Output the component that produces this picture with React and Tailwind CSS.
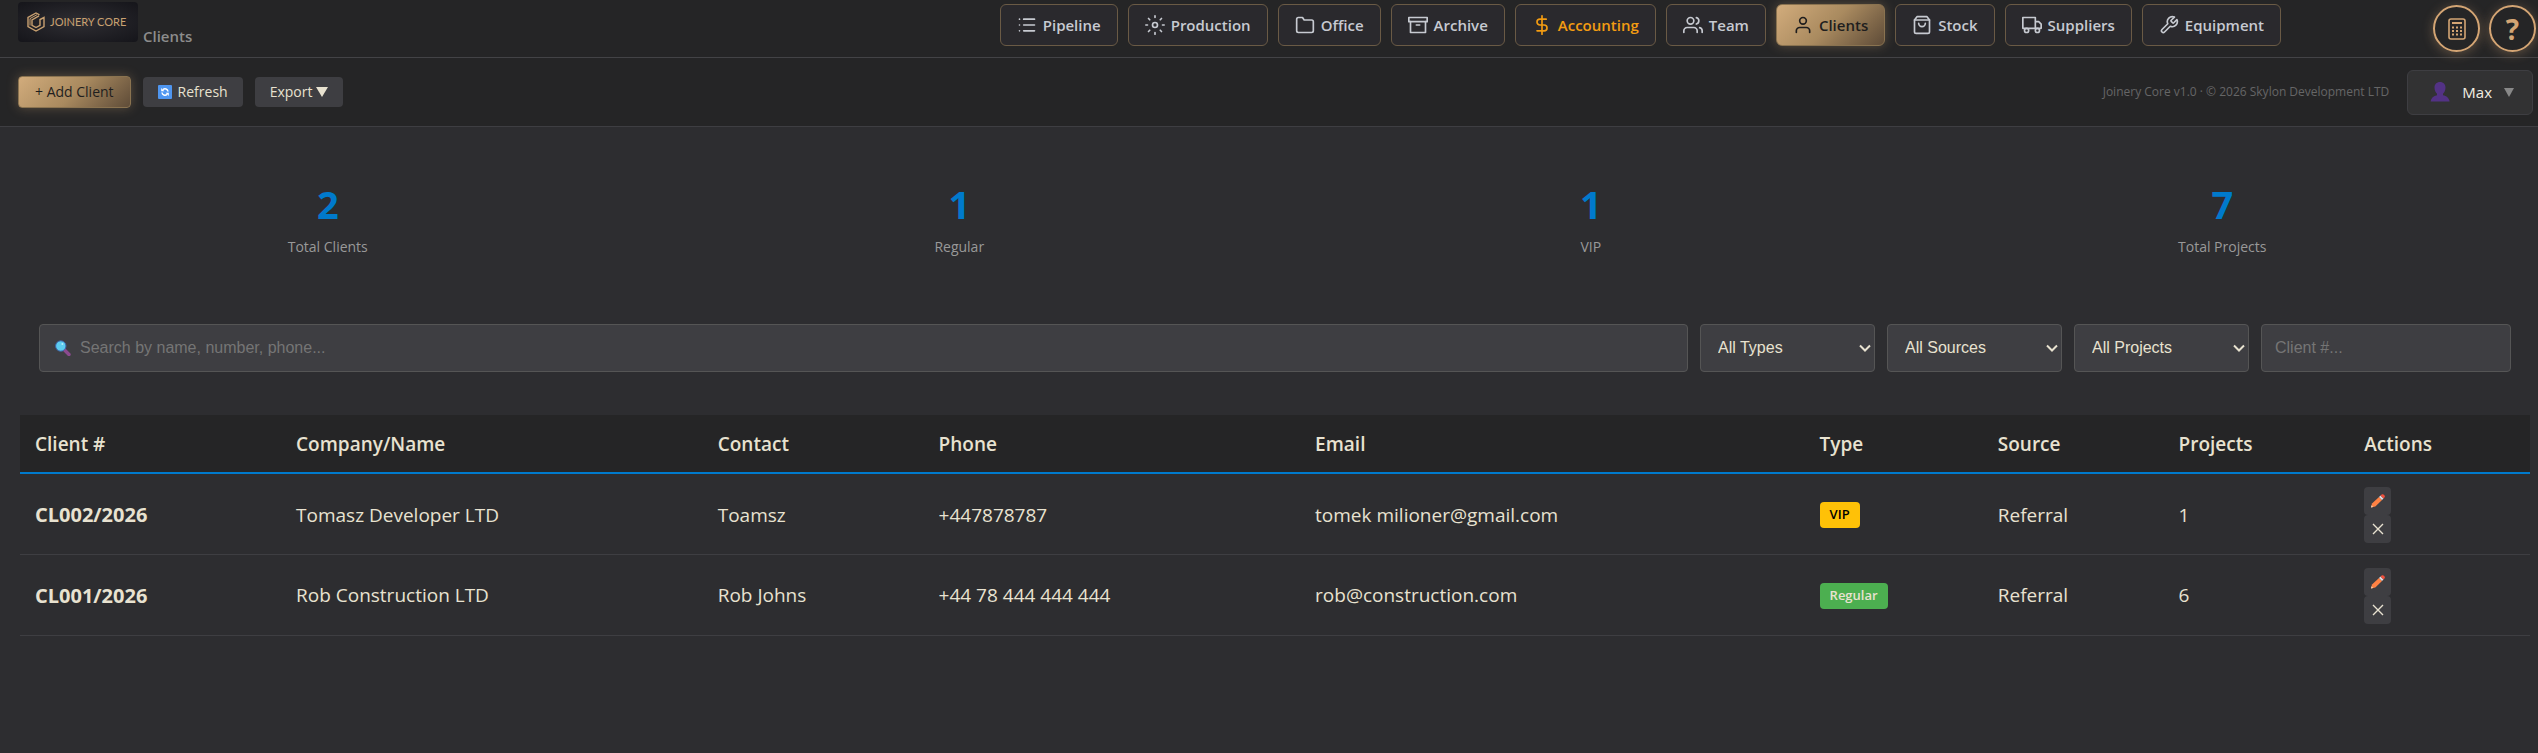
const navItems = [
  { label: "Pipeline", icon: "list" },
  { label: "Production", icon: "gear" },
  { label: "Office", icon: "folder" },
  { label: "Archive", icon: "archive" },
  { label: "Accounting", icon: "dollar", accent: true },
  { label: "Team", icon: "users" },
  { label: "Clients", icon: "user", active: true },
  { label: "Stock", icon: "bag" },
  { label: "Suppliers", icon: "truck" },
  { label: "Equipment", icon: "tool" },
];

const stats = [
  { value: 2, label: "Total Clients" },
  { value: 1, label: "Regular" },
  { value: 1, label: "VIP" },
  { value: 7, label: "Total Projects" },
];

const filters = ["All Types", "All Sources", "All Projects"];

const columns = [
  { label: "Client #", width: "w-[10.4%]" },
  { label: "Company/Name", width: "w-[16.8%]" },
  { label: "Contact", width: "w-[8.8%]" },
  { label: "Phone", width: "w-[15%]" },
  { label: "Email", width: "w-[20.1%]" },
  { label: "Type", width: "w-[7.1%]" },
  { label: "Source", width: "w-[7.2%]" },
  { label: "Projects", width: "w-[7.4%]" },
  { label: "Actions", width: "w-[7.2%]" },
];

const clients = [
  {
    number: "CL002/2026",
    name: "Tomasz Developer LTD",
    contact: "Toamsz",
    phone: "+447878787",
    email: "tomek milioner@gmail.com",
    type: "VIP",
    source: "Referral",
    projects: 1,
  },
  {
    number: "CL001/2026",
    name: "Rob Construction LTD",
    contact: "Rob Johns",
    phone: "+44 78 444 444 444",
    email: "rob@construction.com",
    type: "Regular",
    source: "Referral",
    projects: 6,
  },
];

const iconShapes = {
  list: (
    <>
      <path d="M8 5h13M8 12h13M8 19h13" />
      <path d="M3 5h.01M3 12h.01M3 19h.01" />
    </>
  ),
  gear: (
    <>
      <circle cx="12" cy="12" r="3" />
      <path d="M12 1v2M12 21v2M4.2 4.2l1.5 1.5M18.3 18.3l1.5 1.5M1 12h2M21 12h2M4.2 19.8l1.5-1.5M18.3 5.7l1.5-1.5" />
    </>
  ),
  folder: (
    <path d="M22 19a2 2 0 0 1-2 2H4a2 2 0 0 1-2-2V5a2 2 0 0 1 2-2h5l2 3h9a2 2 0 0 1 2 2z" />
  ),
  archive: (
    <>
      <path d="M21 8v13H3V8" />
      <path d="M1 3h22v5H1z" />
      <path d="M10 12h4" />
    </>
  ),
  dollar: (
    <>
      <path d="M12 1v22" />
      <path d="M17 5H9.5a3.5 3.5 0 0 0 0 7h5a3.5 3.5 0 0 1 0 7H6" />
    </>
  ),
  users: (
    <>
      <path d="M17 21v-2a4 4 0 0 0-4-4H5a4 4 0 0 0-4 4v2" />
      <circle cx="9" cy="7" r="4" />
      <path d="M23 21v-2a4 4 0 0 0-3-3.87M16 3.13a4 4 0 0 1 0 7.75" />
    </>
  ),
  user: (
    <>
      <path d="M20 21v-2a4 4 0 0 0-4-4H8a4 4 0 0 0-4 4v2" />
      <circle cx="12" cy="7" r="4" />
    </>
  ),
  bag: (
    <>
      <path d="M6 2 3 6v14a2 2 0 0 0 2 2h14a2 2 0 0 0 2-2V6l-3-4z" />
      <path d="M3 6h18M16 10a4 4 0 0 1-8 0" />
    </>
  ),
  truck: (
    <>
      <path d="M1 3h15v13H1zM16 8h4l3 3v5h-7z" />
      <circle cx="5.5" cy="18.5" r="2.5" />
      <circle cx="18.5" cy="18.5" r="2.5" />
    </>
  ),
  tool: (
    <path d="M14.7 6.3a1 1 0 0 0 0 1.4l1.6 1.6a1 1 0 0 0 1.4 0l3.77-3.77a6 6 0 0 1-7.94 7.94l-6.91 6.91a2.12 2.12 0 0 1-3-3l6.91-6.91a6 6 0 0 1 7.94-7.94l-3.76 3.76z" />
  ),
};

function NavIcon({ name }) {
  return (
    <svg
      className="size-5 shrink-0"
      viewBox="0 0 24 24"
      fill="none"
      stroke="currentColor"
      strokeWidth="2"
      strokeLinecap="round"
      strokeLinejoin="round"
      aria-hidden="true"
    >
      {iconShapes[name]}
    </svg>
  );
}

function Logo() {
  return (
    <a
      href="#"
      className="flex h-10 w-[120px] items-center gap-1 rounded bg-radial from-[#2f2e33] to-[#15151a] pl-2 text-[#c9a171]"
    >
      <svg className="size-5 shrink-0" viewBox="0 0 20 20" fill="none" stroke="currentColor" aria-hidden="true">
        <path d="M13.5 2.8 10 1 2 5.5v9l8 4.5 8-4.5v-9l-4 2v5.8l-4 2.2-4-2.2V7.8l7-4" strokeWidth="1.4" />
        <path d="M4 13.5V6.6l7-3.9" strokeWidth="1" />
      </svg>
      <span className="font-[Lato] text-[11px] whitespace-nowrap">JOINERY CORE</span>
    </a>
  );
}

function CalculatorIcon() {
  return (
    <svg className="h-[22px] w-[18px]" viewBox="0 0 18 22" fill="none" stroke="currentColor" aria-hidden="true">
      <rect x="1" y="1" width="16" height="20" rx="2" strokeWidth="1.6" />
      <path d="M4 5h10" strokeWidth="2" />
      <path d="M4 9.5h10M4 13h10M4 16.5h10" strokeWidth="2" strokeDasharray="2 2" />
    </svg>
  );
}

function RefreshIcon() {
  return (
    <svg className="size-3.5" viewBox="0 0 14 14" fill="none" aria-hidden="true">
      <rect width="14" height="14" rx="1" fill="#4f96f0" />
      <path d="M10 6.5A3 3 0 0 0 5 4.6M4 7.5a3 3 0 0 0 5 1.9" stroke="#fff" strokeWidth="1.5" />
      <path d="M3.2 3v3.2h3.2zM10.8 11V7.8H7.6z" fill="#fff" />
    </svg>
  );
}

function SearchIcon() {
  return (
    <svg
      className="pointer-events-none absolute top-1/2 left-4 size-4 -translate-y-1/2"
      viewBox="0 0 16 16"
      aria-hidden="true"
    >
      <path d="m9.5 10 4.5 4.5" stroke="#8b4a8f" strokeWidth="3.4" strokeLinecap="round" />
      <circle cx="5.8" cy="6" r="5.2" fill="#5ccbee" stroke="#3f62a8" strokeWidth="1" />
      <circle cx="7.4" cy="4" r="1" fill="#b5ecfb" />
    </svg>
  );
}

function PersonIcon() {
  return (
    <svg className="size-5" viewBox="0 0 20 20" fill="#533285" aria-hidden="true">
      <path d="M10 0c3.4 0 5.5 2.3 5.5 5.6 0 3.4-1.4 5-2.5 6.2v1.4c3.4.6 6.2 2.7 6.6 6.3H.6C1 15.9 3.6 13.8 7 13.2v-1.4C5.9 10.6 4.5 9 4.5 5.6 4.5 2.3 6.6 0 10 0z" />
    </svg>
  );
}

function PencilIcon() {
  return (
    <svg className="size-3.5" viewBox="0 0 14 14" aria-hidden="true">
      <path d="m0 13.5 1-4L8 3l3 3-6.7 6.5z" fill="#ff8244" />
      <path d="m0 13.5.5-2.2 1.7 1.6z" fill="#f3d5b5" />
      <path d="m8 3 1.5-1.5 3 3L11 6z" fill="#d9dbe3" />
      <path d="M9.5 1.5 11 .2c1.7-.4 3.2 1.1 2.8 2.8l-1.3 1.5z" fill="#f0503c" />
    </svg>
  );
}

function CrossIcon() {
  return (
    <svg className="size-3.5" viewBox="0 0 14 14" fill="none" stroke="currentColor" aria-hidden="true">
      <path d="m2 2 10 10M12 2 2 12" strokeWidth="1.4" />
    </svg>
  );
}

function NavButton({ label, icon, accent, active }) {
  const base =
    "flex h-[42px] items-center gap-1.5 rounded-md border px-4 font-semibold whitespace-nowrap";
  let look = "border-[#6a5a45] bg-[#2a292d] text-[#c7cad1]";
  if (accent) look = "border-[#6a5a45] bg-[#2a292d] text-[#f39c12]";
  if (active)
    look =
      "border-[#8a7350] bg-linear-135 from-[#d2ac7c] via-[#a98a5f] to-[#5f4c38] text-[#1f1e1e] shadow-[0_0_12px_#c9a17155]";

  return (
    <button className={`${base} ${look}`}>
      <NavIcon name={icon} />
      {label}
    </button>
  );
}

export default function App() {
  return (
    <div className="min-h-screen bg-[#2d2d30] font-['Open_Sans',sans-serif] text-[#e8e2d0]">
      {/* Top bar */}
      <header className="flex h-[58px] items-start justify-between border-b border-[#434346] bg-[#252526] pr-0.5 pl-[18px]">
        <div className="flex flex-1 items-end gap-[5px] pt-0.5">
          <Logo />
          <h1 className="text-[15px] leading-3 font-semibold text-[#8c8c8c]">Clients</h1>
        </div>
        <nav className="flex gap-2.5 pt-1 pr-[152px] text-[15px]">
          {navItems.map((item) => (
            <NavButton key={item.label} {...item} />
          ))}
        </nav>
        <div className="flex gap-[9px] pt-[5px] text-[#d4a574]">
          <button
            aria-label="Calculator"
            className="flex size-[47px] items-center justify-center rounded-full border-2 border-[#d4a574] shadow-[0_2px_12px_#d4a57455]"
          >
            <CalculatorIcon />
          </button>
          <button
            aria-label="Help"
            className="flex size-[47px] items-center justify-center rounded-full border-2 border-[#d4a574] text-[28px] font-bold shadow-[0_2px_12px_#d4a57455]"
          >
            ?
          </button>
        </div>
      </header>

      {/* Toolbar */}
      <div className="flex h-[69px] items-center justify-between border-b border-[#3e3e42] bg-[#252526] pr-[5px] pl-[18px]">
        <div className="flex items-center gap-3 text-sm">
          <button className="h-8 rounded border border-[#8a7350] bg-linear-135 from-[#d2ac7c] via-[#a98a5f] to-[#5f4c38] px-4 text-[#1f1e1e] shadow-[0_0_12px_#c9a17155]">
            + Add Client
          </button>
          <button className="flex h-[30px] items-center gap-1.5 rounded bg-[#3e3e42] px-[15px]">
            <RefreshIcon />
            Refresh
          </button>
          <button className="flex h-[30px] items-center gap-1 rounded bg-[#3e3e42] px-[15px]">
            Export
            <svg className="h-2.5 w-3" viewBox="0 0 12 10" fill="currentColor" aria-hidden="true">
              <path d="M0 0h12L6 10z" />
            </svg>
          </button>
        </div>
        <div className="flex items-center gap-[18px]">
          <p className="text-xs text-[#666]">Joinery Core v1.0 · © 2026 Skylon Development LTD</p>
          <button className="flex h-[45px] items-center gap-3 rounded-md border border-[#3e3e42] bg-[#323233] pr-[18px] pl-[22px] text-[15px] text-[#f3efe4]">
            <PersonIcon />
            Max
            <svg className="h-[9px] w-2.5" viewBox="0 0 10 9" fill="#888" aria-hidden="true">
              <path d="M0 0h10L5 9z" />
            </svg>
          </button>
        </div>
      </div>

      <main className="pr-2 pl-5">
        {/* Stats */}
        <section className="grid grid-cols-4 gap-4 pt-[52px] text-center">
          {stats.map((stat) => (
            <div key={stat.label}>
              <div className="text-[38px] leading-[50px] font-bold text-[#007acc]">{stat.value}</div>
              <div className="mt-1.5 text-sm leading-6 text-[#999]">{stat.label}</div>
            </div>
          ))}
        </section>

        {/* Filters */}
        <form className="mt-[65px] flex gap-3 px-[19px] font-['Liberation_Sans',sans-serif] text-base">
          <div className="relative flex-1">
            <SearchIcon />
            <input
              type="text"
              aria-label="Search clients"
              placeholder="Search by name, number, phone..."
              className="h-12 w-full rounded border border-[#555] bg-[#3e3e42] pr-4 pl-10 placeholder:text-[#757575]"
            />
          </div>
          {filters.map((filter) => (
            <div key={filter} className="relative w-[175px]">
              <select
                aria-label={filter}
                className="h-12 w-full appearance-none rounded border border-[#555] bg-[#3e3e42] px-[17px]"
              >
                <option>{filter}</option>
              </select>
              <svg
                className="pointer-events-none absolute top-1/2 right-1 h-2 w-3 -translate-y-1/2"
                viewBox="0 0 12 8"
                fill="none"
                stroke="currentColor"
                strokeWidth="2"
                aria-hidden="true"
              >
                <path d="m1 1.5 5 5 5-5" />
              </svg>
            </div>
          ))}
          <input
            type="text"
            aria-label="Client number"
            placeholder="Client #..."
            className="h-12 w-[250px] rounded border border-[#555] bg-[#3e3e42] px-[13px] placeholder:text-[#757575]"
          />
        </form>

        {/* Clients table */}
        <table className="mt-[43px] w-full table-fixed text-left text-[19px]">
          <thead>
            <tr className="h-[58px] border-b-2 border-[#007acc] bg-[#252526]">
              {columns.map((column) => (
                <th key={column.label} className={`${column.width} px-[15px] pt-0.5 font-semibold`}>
                  {column.label}
                </th>
              ))}
            </tr>
          </thead>
          <tbody>
            {clients.map((client) => (
              <tr key={client.number} className="h-[81px] border-b border-[#3e3e42]">
                <td className="px-[15px] pt-0.5 text-xl font-bold">{client.number}</td>
                <td className="px-[15px] pt-0.5">{client.name}</td>
                <td className="px-[15px] pt-0.5">{client.contact}</td>
                <td className="px-[15px] pt-0.5">{client.phone}</td>
                <td className="px-[15px] pt-0.5">{client.email}</td>
                <td className="px-[15px] pt-0.5">
                  <span
                    className={`flex h-[26px] w-fit items-center rounded px-2.5 text-[13px] font-semibold ${
                      client.type === "VIP" ? "bg-[#ffc107] text-black" : "bg-[#4caf50]"
                    }`}
                  >
                    {client.type}
                  </span>
                </td>
                <td className="px-[15px] pt-0.5">{client.source}</td>
                <td className="px-[15px] pt-0.5">{client.projects}</td>
                <td className="px-[15px] pt-0.5">
                  <div className="flex w-[27px] flex-col">
                    <button
                      aria-label={`Edit ${client.name}`}
                      className="flex h-7 items-center justify-center rounded-sm bg-[#3e3e42]"
                    >
                      <PencilIcon />
                    </button>
                    <button
                      aria-label={`Delete ${client.name}`}
                      className="flex h-7 items-center justify-center rounded-sm bg-[#3e3e42]"
                    >
                      <CrossIcon />
                    </button>
                  </div>
                </td>
              </tr>
            ))}
          </tbody>
        </table>
      </main>
    </div>
  );
}
